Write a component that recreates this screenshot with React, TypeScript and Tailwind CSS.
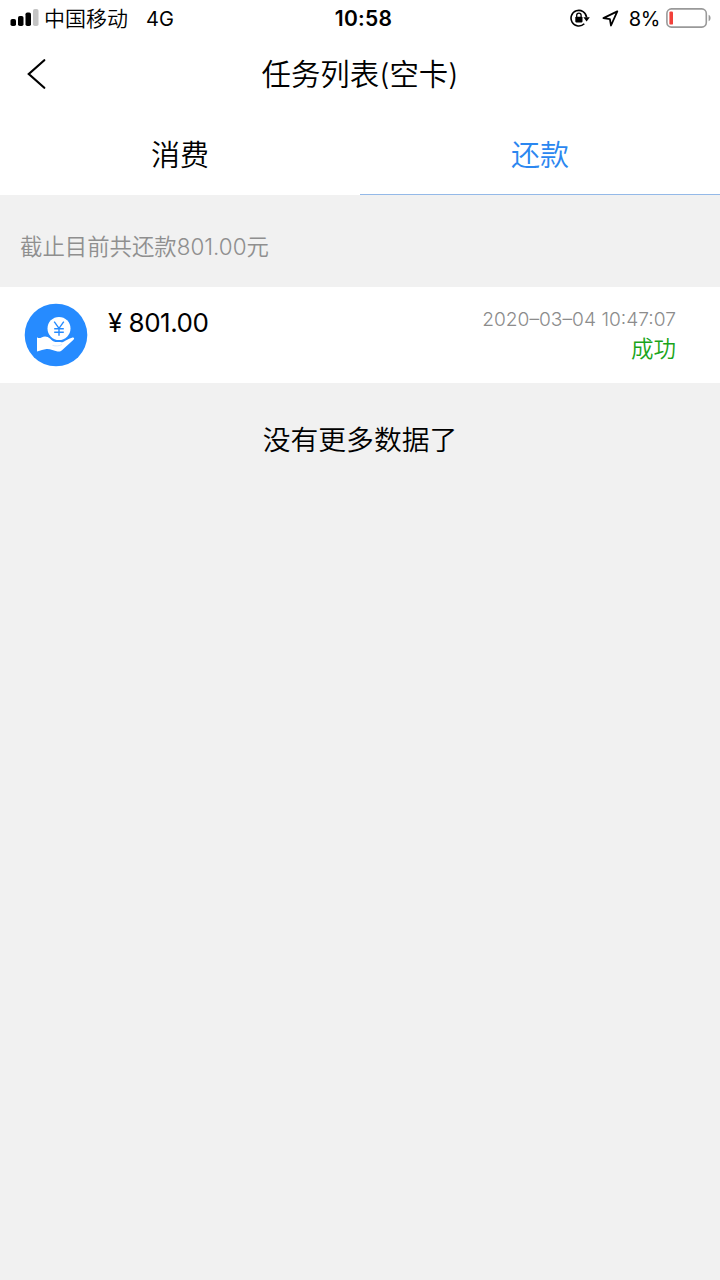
import clsx from "clsx";

interface Repayment {
  id: number;
  amount: string;
  time: string;
  status: string;
}

const tabs = [
  { key: "consume", label: "消费" },
  { key: "repay", label: "还款" },
];

const repayments: Repayment[] = [
  { id: 1, amount: "801.00", time: "2020–03–04 10:47:07", status: "成功" },
];

function StatusBar() {
  return (
    <div className="grid h-9 grid-cols-[1fr_auto_1fr] items-center text-[20px] leading-[34px]">
      <div className="flex items-center pl-2.5">
        {/* Signal */}
        <svg width="29" height="18" viewBox="0 0 29 18" aria-label="信号">
          <rect x="0.5" y="10" width="5.5" height="7" rx="1.8" />
          <rect x="8" y="7" width="5.5" height="10" rx="1.8" />
          <rect x="15.5" y="3.5" width="5.5" height="13.5" rx="1.8" />
          <rect x="23" y="0" width="5.5" height="17" rx="1.8" fill="#c4c4c4" />
        </svg>
        <span className="ml-[5px] pt-0.5 text-[21px]">中国移动</span>
        <span className="ml-[18px] pt-0.5 font-normal">4G</span>
      </div>

      <span className="pl-[7px] pt-0.5 text-[21px] font-semibold tracking-[0.3px]">10:58</span>

      <div className="flex items-center justify-end pr-[9px]">
        {/* Rotation lock */}
        <svg width="20" height="18" viewBox="0 0 20 18" fill="none">
          <path d="M14.3 14.8A7.8 7.8 0 1 1 16.6 8.4" stroke="#000" strokeWidth="1.6" />
          <path d="M13.4 8.2h6.4l-3.2 4.2z" fill="#000" />
          <rect x="5.3" y="7.8" width="7.2" height="5.6" rx="0.8" fill="#000" />
          <path d="M6.7 8.2V6.3a2.2 2.2 0 0 1 4.4 0v1.9" stroke="#000" strokeWidth="1.3" />
        </svg>
        {/* Location */}
        <svg className="ml-3" width="17" height="17" viewBox="0 0 17 17" fill="none">
          <path d="M15.3 1.4 1.4 8.1l6.5 1 1.1 6.4z" stroke="#000" strokeWidth="1.8" strokeLinejoin="round" />
        </svg>
        <span className="ml-2.5 pt-0.5 font-normal tracking-[-0.4px]">8%</span>
        {/* Battery */}
        <svg className="ml-1.5" width="45" height="20" viewBox="0 0 45 20" fill="none">
          <rect x="0.9" y="0.9" width="39.4" height="18.2" rx="4.5" stroke="#999" strokeWidth="1.6" />
          <rect x="3.4" y="3.4" width="3.6" height="13.2" rx="1.2" fill="#f2403a" />
          <path d="M42.6 6.8c2.6.9 2.6 5.5 0 6.4z" fill="#999" />
        </svg>
      </div>
    </div>
  );
}

function RepayIcon() {
  return (
    <svg width="64" height="64" viewBox="0 0 64 64" fill="none">
      <circle cx="32" cy="32" r="31.3" fill="#268bff" />
      <circle cx="35" cy="25.5" r="11.5" fill="#fff" />
      <path
        d="M30.2 18.7l4.8 6.6 4.8-6.6M35 25.3v7.4M30.2 25.8h9.6M30.2 29.2h9.6"
        stroke="#268bff"
        strokeWidth="1.4"
      />
      <path
        d="M13 34.2c1.5 1.2 3 1 4.5.2 3.300-1.700 6.200-.9 8.500 1.200 1.700 1.600 3 3.200 5.500 3.300l3.800.2c1.600.1 3 .3 4.300-.4 3-1.600 5.300-3.300 8.300-4 2.200-.5 2.900.6 1.600 2L38 47.300c-1.200 1.200-2.800 1.500-4.500 1.100-3.900-.9-7.300-2.700-11-2.400-3.300.300-5.600 1.600-9.500 2.600z"
        fill="#fff"
      />
      <path d="M28.500 42.400c3 .9 6.800.7 9.500-.9" stroke="#b9d9ff" strokeWidth="0.6" />
    </svg>
  );
}

export default function App() {
  const active = "repay";

  return (
    <div className="min-h-screen bg-[#f1f1f1] font-['Inter','Noto_Sans_CJK_SC',sans-serif] font-[350] text-black">
      <header className="bg-white">
        <StatusBar />

        {/* Nav bar */}
        <div className="grid h-[78px] grid-cols-[1fr_auto_1fr] items-center">
          <button aria-label="返回" className="pb-0.5 pl-[26px]">
            <svg width="21" height="32" viewBox="0 0 21 32" fill="none">
              <path d="M18.3 2.2 2.8 16l15.500 13.800" stroke="#000" strokeWidth="2.200" strokeLinecap="round" />
            </svg>
          </button>
          <h1 className="text-[29.4px]">任务列表(空卡)</h1>
        </div>

        {/* Tabs */}
        <div className="flex h-[81px]">
          {tabs.map((tab) => (
            <button
              key={tab.key}
              className={clsx(
                "flex-1 border-b pt-1 text-[29px]",
                tab.key === active ? "border-[#94b9e8] text-[#2b87f0]" : "border-white"
              )}
            >
              {tab.label}
            </button>
          ))}
        </div>
      </header>

      <p className="flex h-[92px] items-center px-5 pt-3 text-[22.4px] text-[#8f8f8f]">
        截止目前共还款801.00元
      </p>

      <ul>
        {repayments.map((item) => (
          <li key={item.id} className="flex h-24 bg-white pl-6 pr-11">
            <div className="pt-4">
              <RepayIcon />
            </div>
            <p className="ml-5 pt-[17px] text-[26px] font-normal leading-[38px] tracking-[-0.5px]">
              ¥ {item.amount}
            </p>
            <div className="ml-auto pt-4 text-right">
              <p className="text-[19.2px] leading-[32px] text-[#8c8c8c]">{item.time}</p>
              <p className="text-[22.5px] leading-[28px] text-[#1aa51a]">{item.status}</p>
            </div>
          </li>
        ))}
      </ul>

      <p className="pt-[37px] text-center text-[27.8px] leading-[40px]">没有更多数据了</p>
    </div>
  );
}
